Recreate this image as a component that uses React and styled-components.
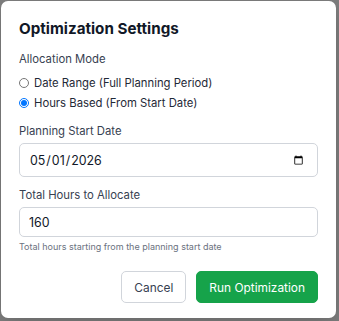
import React, { useState } from "react";
import styled, { createGlobalStyle } from "styled-components";

const GlobalStyle = createGlobalStyle`
  html, body { margin: 0; padding: 0; background: #7f7f7f; }
  body { font-family: Inter, "Liberation Sans", sans-serif; }
  * { box-sizing: border-box; }
`;

const Overlay = styled.div`
  width: 339px;
  height: 321px;
  padding: 1px 3px 0 1px;
  background: #7f7f7f;
  overflow: hidden;
`;

const Modal = styled.div`
  width: 335px;
  background: #ffffff;
  border-radius: 7px;
  padding: 18px 18px 15px 18px;
  box-shadow: 0 8px 24px rgba(0, 0, 0, 0.18);
  display: flex;
  flex-direction: column;
`;

const Title = styled.h2`
  margin: 0 0 12px 0;
  font-size: 15.2px;
  line-height: 20px;
  font-weight: 700;
  color: #111827;
`;

const Field = styled.div`
  display: flex;
  flex-direction: column;
  margin-bottom: ${(p) => p.$mb ?? 10}px;
`;

const Label = styled.label`
  font-size: 11.3px;
  line-height: 16px;
  color: #374151;
  margin-bottom: ${(p) => p.$mb ?? 4}px;
`;

const RadioGroup = styled.div`
  display: flex;
  flex-direction: column;
`;

const RadioRow = styled.label`
  display: flex;
  align-items: center;
  gap: 5px;
  height: 20px;
  font-size: 11.3px;
  color: #1f2937;
  cursor: pointer;
`;

const Radio = styled.input.attrs({ type: "radio" })`
  margin: 0;
  width: 10px;
  height: 10px;
`;

const Input = styled.input`
  width: 100%;
  height: ${(p) => p.$h}px;
  border: 1px solid #d1d5db;
  border-radius: 5px;
  padding: 0 9px;
  font-family: Inter, "Liberation Sans", sans-serif;
  font-size: 12.4px;
  color: #111827;
  background: #fff;
  outline: none;
  &::-webkit-calendar-picker-indicator {
    width: 11px;
    height: 11px;
    padding: 0;
    margin-right: 4px;
  }
`;

const Help = styled.div`
  font-size: 9px;
  line-height: 12px;
  color: #6b7280;
  margin-top: 4px;
`;

const Footer = styled.div`
  display: flex;
  justify-content: flex-end;
  gap: 10px;
  margin-top: 18px;
`;

const Button = styled.button`
  height: 32px;
  padding: 0 12px;
  border-radius: 5px;
  font-family: Inter, "Liberation Sans", sans-serif;
  font-size: 11.9px;
  cursor: pointer;
  border: 1px solid ${(p) => (p.$primary ? "#16a34a" : "#d1d5db")};
  background: ${(p) => (p.$primary ? "#16a34a" : "#ffffff")};
  color: ${(p) => (p.$primary ? "#ffffff" : "#374151")};
`;

export default function App() {
  const [mode, setMode] = useState("hours");
  const [date, setDate] = useState("2026-05-01");
  const [hours, setHours] = useState("160");
  return (
    <>
      <GlobalStyle />
      <Overlay>
        <Modal>
          <Title>Optimization Settings</Title>
          <Field>
            <Label $mb={6}>Allocation Mode</Label>
            <RadioGroup>
              <RadioRow>
                <Radio
                  name="mode"
                  checked={mode === "range"}
                  onChange={() => setMode("range")}
                />
                Date Range (Full Planning Period)
              </RadioRow>
              <RadioRow>
                <Radio
                  name="mode"
                  checked={mode === "hours"}
                  onChange={() => setMode("hours")}
                />
                Hours Based (From Start Date)
              </RadioRow>
            </RadioGroup>
          </Field>
          <Field>
            <Label>Planning Start Date</Label>
            <Input
              type="date"
              $h={34}
              value={date}
              onChange={(e) => setDate(e.target.value)}
            />
          </Field>
          <Field $mb={0}>
            <Label>Total Hours to Allocate</Label>
            <Input
              type="number"
              $h={30}
              value={hours}
              onChange={(e) => setHours(e.target.value)}
            />
            <Help>Total hours starting from the planning start date</Help>
          </Field>
          <Footer>
            <Button>Cancel</Button>
            <Button $primary>Run Optimization</Button>
          </Footer>
        </Modal>
      </Overlay>
    </>
  );
}
